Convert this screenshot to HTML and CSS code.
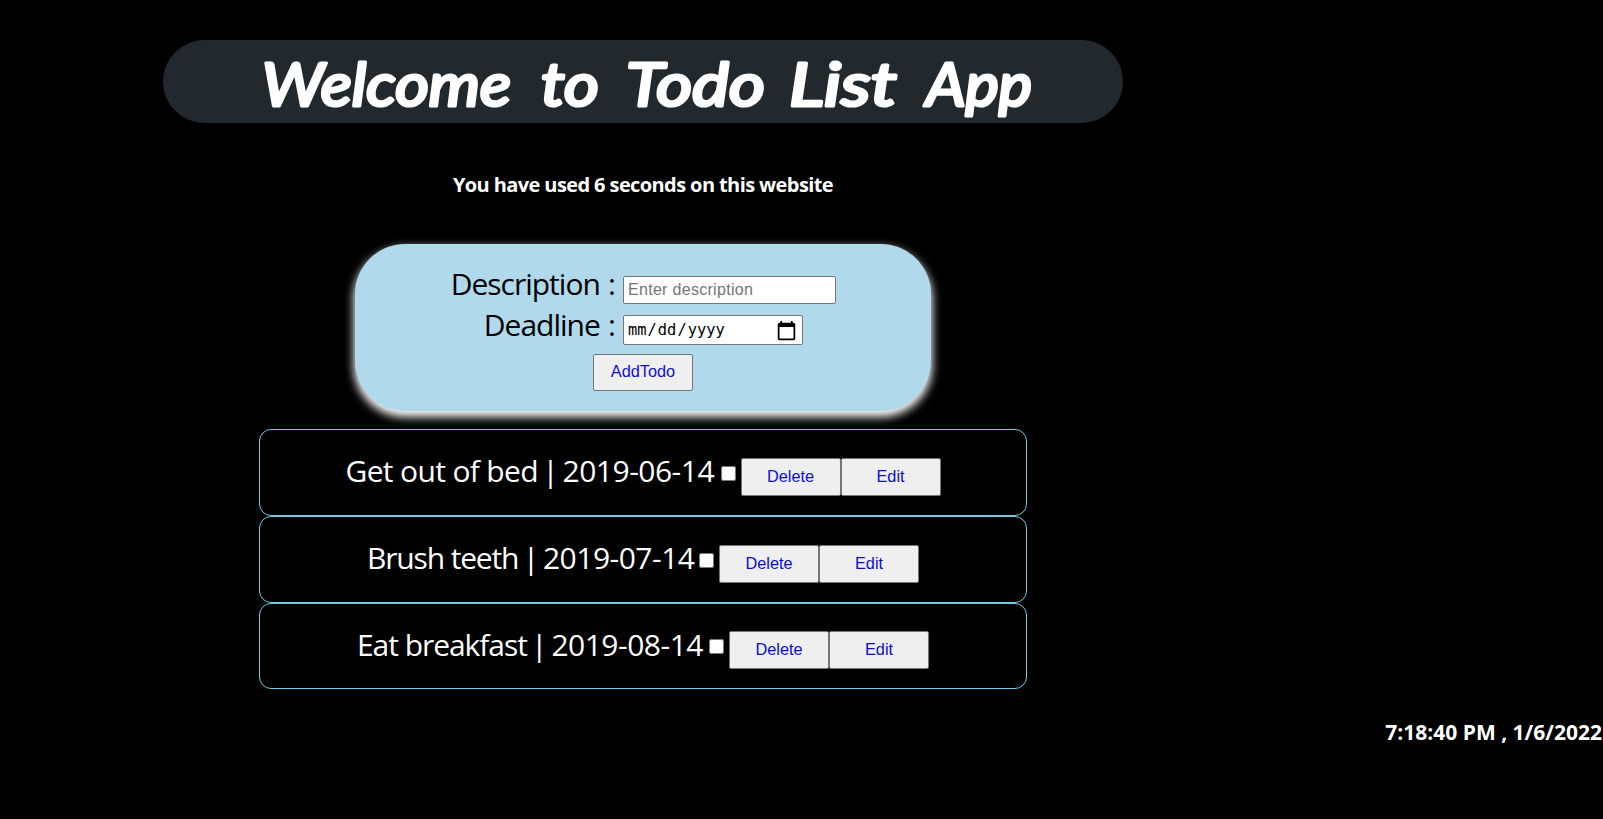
FILE: index.html
```html
<!DOCTYPE html>
<html lang="en">
<head>
<meta charset="utf-8">
<title>Todo List App</title>
<link rel="stylesheet" href="styles.css">
</head>
<body>
<main class="app">
  <h1 class="banner">
    <svg class="banner-text" width="960" height="83" viewBox="0 0 960 83">
      <text x="99" y="66" textLength="249" lengthAdjust="spacingAndGlyphs">Welcome</text>
      <text x="378" y="66" textLength="58" lengthAdjust="spacingAndGlyphs">to</text>
      <text x="463" y="66" textLength="139" lengthAdjust="spacingAndGlyphs">Todo</text>
      <text x="626" y="66" textLength="108" lengthAdjust="spacingAndGlyphs">List</text>
      <text x="763" y="66" textLength="106" lengthAdjust="spacingAndGlyphs">App</text>
    </svg>
  </h1>
  <p class="usage">You have used 6 seconds on this website</p>
  <form class="form">
    <div class="field"><label class="label" for="description">Description :</label><input class="text-input" id="description" type="text" placeholder="Enter description"></div>
    <div class="field"><label class="label" for="deadline">Deadline :</label><input class="date-input" id="deadline" type="date"></div>
    <button class="button add" type="button">AddTodo</button>
  </form>
  <ul class="list">
    <li class="item"><span class="title bed"><span class="name">Get out of bed</span> | <span class="date">2019-06-14</span></span><input class="check" type="checkbox"><button class="button">Delete</button><button class="button">Edit</button></li>
    <li class="item"><span class="title teeth"><span class="name">Brush teeth</span> | <span class="date">2019-07-14</span></span><input class="check" type="checkbox"><button class="button">Delete</button><button class="button">Edit</button></li>
    <li class="item last"><span class="title breakfast"><span class="name">Eat breakfast</span> | <span class="date">2019-08-14</span></span><input class="check" type="checkbox"><button class="button">Delete</button><button class="button">Edit</button></li>
  </ul>
</main>
<footer class="clock">7:18:40 PM , 1/6/2022</footer>
</body>
</html>
```
FILE: styles.css
```css
* { box-sizing: border-box; }
body { margin: 0; background: #000; color: #fff; font-family: "Segoe UI", "Open Sans", sans-serif; overflow: hidden; }
.app { width: 1286px; padding-top: 40px; display: flex; flex-direction: column; align-items: center; }
.banner { width: 960px; height: 83px; margin: 0; border-radius: 42px; background: #21292e; }
.banner-text {
  display: block; fill: #fff; stroke: #fff; stroke-width: 3.2px; stroke-linejoin: round;
  font: italic 400 60px "Comic Sans MS", Lato, sans-serif;
}
.usage { margin: 47px 0 0; height: 30px; font-size: 20px; font-weight: 700; line-height: 30px; letter-spacing: -0.6px; white-space: nowrap; }
.form {
  width: 576px; height: 167px; margin-top: 44px; padding-top: 21px; border-radius: 50px;
  background: #b0d9ec; color: #000; box-shadow: 0 5px 10px 1px #fff;
  display: flex; flex-direction: column; align-items: center;
}
.field { width: 576px; height: 41px; display: flex; align-items: center; }
.label { width: 268px; margin-top: -3px; padding-right: 8px; font-size: 30px; line-height: 40px; text-align: right; white-space: nowrap; letter-spacing: -1px; word-spacing: 1.5px; }
.text-input, .date-input { margin: 9px 0 0; border: 1px solid #767676; border-radius: 2px; background: #fff; color: #000; font-size: 16px; }
.text-input { width: 213px; height: 28px; padding: 1px 4px; font-family: Arial, "Liberation Sans", sans-serif; letter-spacing: 0.3px; }
.date-input { width: 180px; height: 30px; margin-top: 7px; padding: 1px 5px 1px 3px; font-family: "DejaVu Sans Mono", monospace; font-size: 15.4px; }
.date-input::-webkit-calendar-picker-indicator { width: 21px; height: 21px; padding: 0; background-size: 21px 21px; }
.button {
  width: 100px; height: 38px; margin: 0; padding: 0 0 1px; border: 1px solid #767676; border-radius: 2px;
  background: #efefef; color: #0d0dd0; font: 16.3px Arial, "Liberation Sans", sans-serif;
}
.add { height: 37px; margin-top: 7px; padding-bottom: 2px; }
.list { width: 768px; margin: 18px 0 0; padding: 0; list-style: none; }
.item { height: 87px; padding-bottom: 3px; border: 1px solid #75c9e1; border-radius: 12px; display: flex; align-items: center; justify-content: center; }
.last { height: 86px; }
.title { font-size: 30px; line-height: 40px; white-space: nowrap; letter-spacing: -0.5px; word-spacing: -3px; }
.name, .date { word-spacing: 0; }
.bed { width: 371px; }
.teeth { width: 328px; }
.breakfast { width: 348px; }
.bed .name { letter-spacing: -0.65px; }
.teeth .name { letter-spacing: -1.15px; }
.breakfast .name { letter-spacing: -1.05px; }
.check { width: 15px; height: 15px; margin: 4px 5px 0 4px; }
.item .button { margin-top: 11px; }
.clock { margin-top: 28px; padding-right: 1px; text-align: right; font-size: 21px; font-weight: 700; line-height: 30px; }
```
